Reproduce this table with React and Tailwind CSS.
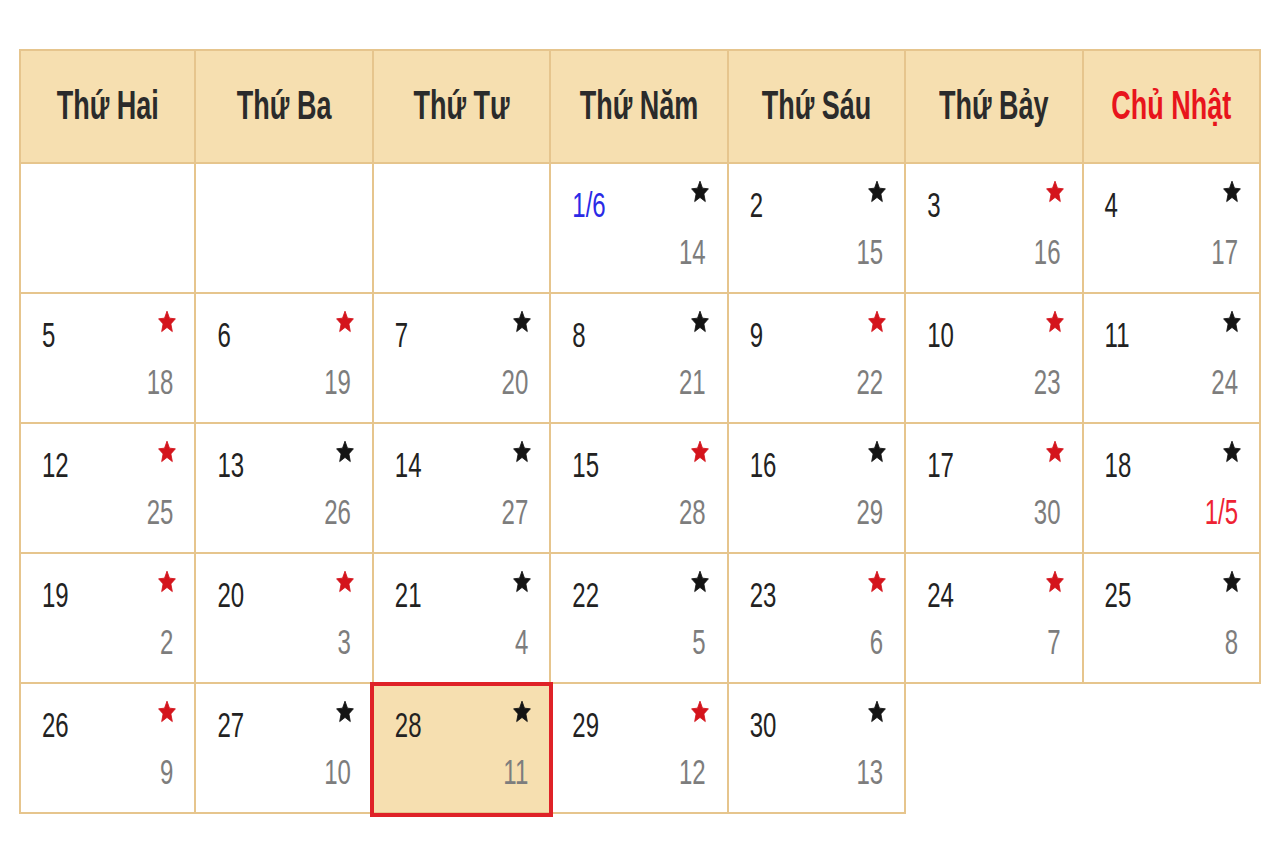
const DAYS = ['Thứ Hai', 'Thứ Ba', 'Thứ Tư', 'Thứ Năm', 'Thứ Sáu', 'Thứ Bảy', 'Chủ Nhật']

// ngày trống đầu tháng
const OFFSET = 3
const RED_STARS = [3, 5, 6, 9, 10, 12, 15, 17, 19, 20, 23, 24, 26, 29]
const TODAY = 28

function lunarOf(d) {
  if (d <= 17) return { text: String(d + 13), red: false }
  if (d === 18) return { text: '1/5', red: true }
  return { text: String(d - 17), red: false }
}

function Star({ red }) {
  return (
    <svg width="18" height="23" viewBox="0 0 24 24" preserveAspectRatio="none" className="shrink-0">
      <path
        d="M12 1.2l3.3 7.3 7.9.7-6 5.3 1.9 8L12 18.2l-7.1 4.3 1.9-8-6-5.3 7.9-.7z"
        fill={red ? '#d4141c' : '#141414'}
        stroke={red ? '#d4141c' : '#141414'}
        strokeWidth="1"
        strokeLinejoin="round"
      />
    </svg>
  )
}

function DayCell({ day, col }) {
  const lunar = lunarOf(day)
  const isToday = day === TODAY
  return (
    <div
      className={`relative h-[130px] border-r-2 border-b-2 border-[#e6c58d] pt-[16px] pl-[21px] pr-[18px] ${
        col === 0 ? 'border-l-2' : ''
      } ${isToday ? 'bg-[#f6dfb0]' : 'bg-white'}`}
    >
      <div className="flex items-start justify-between">
        <span
          className={`mt-[13px] inline-block h-[24px] text-[24px] leading-none scale-y-[1.48] ${
            day === 1 ? 'text-[#2a2ae6]' : 'text-[#222]'
          }`}
        >
          {day === 1 ? '1/6' : day}
        </span>
        <Star red={RED_STARS.includes(day)} />
      </div>
      <div className="mt-[23px] flex justify-end pr-[3px]">
        <span
          className={`inline-block h-[24px] text-[24px] leading-none scale-y-[1.48] ${
            lunar.red ? 'text-[#ee2233]' : 'text-[#7d7d7d]'
          }`}
        >
          {lunar.text}
        </span>
      </div>
      {isToday && (
        <div className="absolute z-10 -left-[4px] -top-[2px] -right-[4px] -bottom-[5px] border-4 border-[#df2228]" />
      )}
    </div>
  )
}

export default function App() {
  const cells = []
  for (let i = 0; i < OFFSET; i++) cells.push(null)
  for (let d = 1; d <= 30; d++) cells.push(d)

  return (
    <div className="min-h-screen bg-white pt-[49px] pl-[19px] font-['Liberation_Sans',Arial,sans-serif]">
      <div className="grid w-[1242px] grid-cols-7">
        {DAYS.map((name, i) => (
          <div
            key={name}
            className={`flex h-[115px] items-center justify-center border-t-2 border-r-2 border-b-2 border-[#e6c58d] bg-[#f6dfb0] ${
              i === 0 ? 'border-l-2' : ''
            }`}
          >
            <span
              className={`inline-block text-[27px] font-bold leading-none scale-y-[1.5] ${
                i === 6 ? 'text-[#e8141c]' : 'text-[#2b2b2b]'
              }`}
            >
              {name}
            </span>
          </div>
        ))}

        {cells.map((day, idx) =>
          day === null ? (
            <div
              key={'e' + idx}
              className={`h-[130px] border-r-2 border-b-2 border-[#e6c58d] bg-white ${idx % 7 === 0 ? 'border-l-2' : ''}`}
            />
          ) : (
            <DayCell key={day} day={day} col={idx % 7} />
          )
        )}
      </div>
    </div>
  )
}
